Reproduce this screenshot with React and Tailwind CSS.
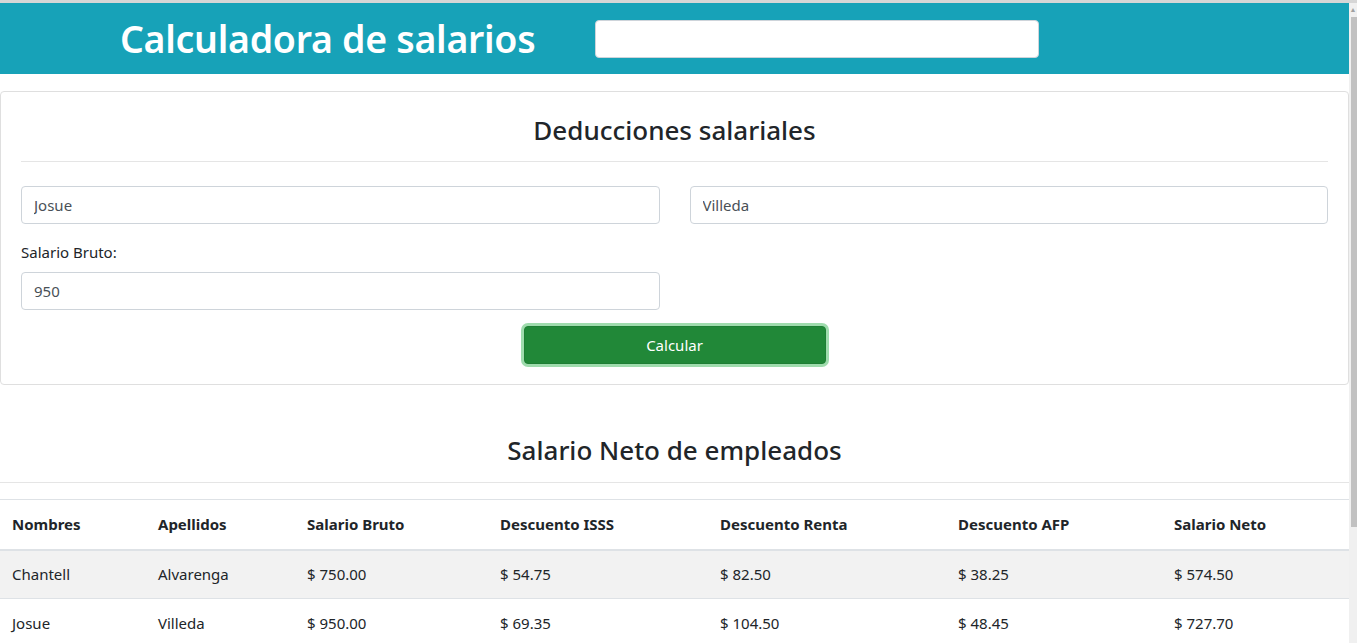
import React from 'react';

const empleados = [
  { nombre: 'Chantell', apellido: 'Alvarenga', bruto: '$ 750.00', isss: '$ 54.75', renta: '$ 82.50', afp: '$ 38.25', neto: '$ 574.50' },
  { nombre: 'Josue', apellido: 'Villeda', bruto: '$ 950.00', isss: '$ 69.35', renta: '$ 104.50', afp: '$ 48.45', neto: '$ 727.70' },
];

const cols = ['w-[146px]', 'w-[149px]', 'w-[193px]', 'w-[220px]', 'w-[238px]', 'w-[216px]', 'w-[187px]'];
const heads = ['Nombres', 'Apellidos', 'Salario Bruto', 'Descuento ISSS', 'Descuento Renta', 'Descuento AFP', 'Salario Neto'];

const App = () => {
  return (
    <div className="h-[643px] overflow-hidden bg-white text-[#212529] font-['Noto_Sans','Open_Sans',sans-serif] border-t-[3px] border-[#d6d6d6] flex">
      <div className="w-[1349px] shrink-0">
        {/* HEADER */}
        <header className="h-[71px] bg-[#17a2b8] flex items-center">
          <h1 className="ml-[120px] text-[37.5px] font-semibold text-white leading-none tracking-[-0.3px]">Calculadora de salarios</h1>
          <input className="ml-[60px] w-[444px] h-[38px] bg-white rounded border border-[#ced4da]" />
        </header>

        {/* FORMULARIO */}
        <section className="mt-[17px] border border-[#dfdfdf] rounded px-5 pt-[20px] pb-[20px]">
          <h2 className="text-center text-[26px] font-medium leading-[36px]">Deducciones salariales</h2>
          <hr className="mt-[13px] border-[#e5e5e5]" />
          <div className="mt-6 grid grid-cols-2 gap-[30px]">
            <input defaultValue="Josue" className="h-[38px] px-3 text-[15px] text-[#495057] border border-[#ced4da] rounded" />
            <input defaultValue="Villeda" className="h-[38px] px-3 text-[15px] text-[#495057] border border-[#ced4da] rounded" />
          </div>
          <div className="mt-4 text-[15px] leading-6">Salario Bruto:</div>
          <div className="mt-[8px] grid grid-cols-2 gap-[30px]">
            <input defaultValue="950" className="h-[38px] px-3 text-[15px] text-[#495057] border border-[#ced4da] rounded" />
          </div>
          <div className="mt-4 flex justify-center">
            <button className="w-[302px] h-[38px] bg-[#218838] text-white text-[15px] rounded border border-[#1e7e34] ring-[3px] ring-[#9fdcad]">Calcular</button>
          </div>
        </section>

        {/* TABLA */}
        <h2 className="mt-[47px] text-center text-[26px] font-medium leading-[36px]">Salario Neto de empleados</h2>
        <hr className="mt-[14px] border-[#e5e5e5]" />
        <table className="mt-4 w-full table-fixed border-collapse text-[15px]">
          <thead>
            <tr className="border-t border-[#dee2e6] border-b-2">
              {heads.map((h, i) => (
                <th key={h} className={`${cols[i]} h-[50px] px-3 text-left font-bold`}>{h}</th>
              ))}
            </tr>
          </thead>
          <tbody>
            {empleados.map((e, i) => (
              <tr key={e.nombre} className={`border-b border-[#dee2e6] ${i === 0 ? 'bg-[#f2f2f2]' : ''}`}>
                {[e.nombre, e.apellido, e.bruto, e.isss, e.renta, e.afp, e.neto].map((v, j) => (
                  <td key={j} className="h-[49px] px-3">{v}</td>
                ))}
              </tr>
            ))}
          </tbody>
        </table>
      </div>

      {/* scrollbar */}
      <div className="w-[8px] bg-[#f0f0f0] flex flex-col items-end">
        <div className="h-[14px] text-[7px] text-[#a0a0a0] leading-[14px] self-center">▲</div>
        <div className="w-[6px] h-[510px] bg-[#c1c1c1]" />
      </div>
    </div>
  );
};

export default App;
